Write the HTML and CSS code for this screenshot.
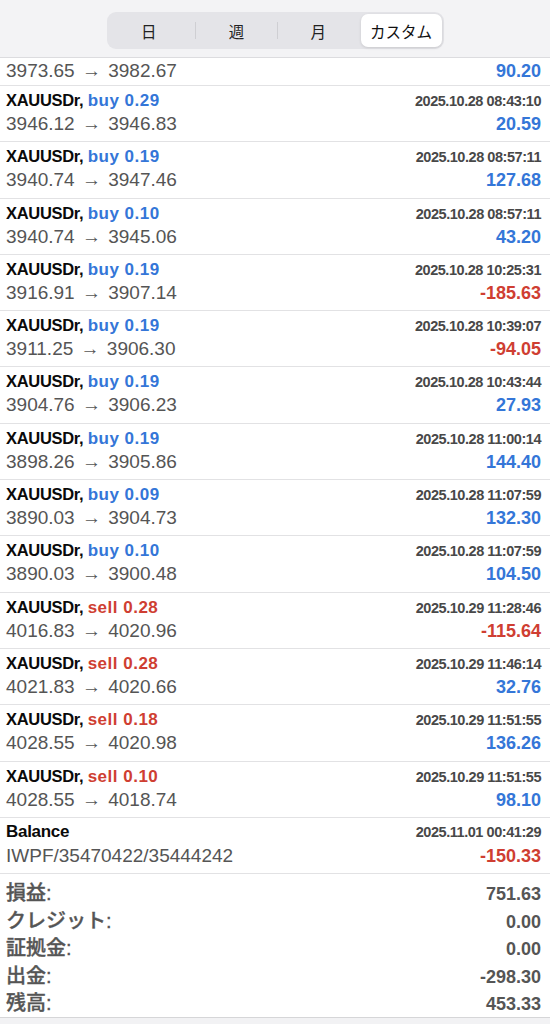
FILE: index.html
```html
<!DOCTYPE html>
<html lang="ja">
<head>
<meta charset="utf-8">
<title>履歴</title>
<link rel="stylesheet" href="styles.css">
</head>
<body>
<div class="app">
  <header class="header">
    <div class="seg">
      <div class="seg-item">日</div>
      <div class="seg-div"></div>
      <div class="seg-item">週</div>
      <div class="seg-div"></div>
      <div class="seg-item">月</div>
      <div class="seg-item seg-active">カスタム</div>
    </div>
  </header>

  <div class="list">
    <div class="row row-partial">
      <div class="line2"><span class="price">3973.65 → 3982.67</span><span class="pnl pos">90.20</span></div>
    </div>

    <div class="row">
      <div class="line1"><span class="sym">XAUUSDr, <span class="act buy">buy 0.29</span></span><span class="date">2025.10.28 08:43:10</span></div>
      <div class="line2"><span class="price">3946.12 → 3946.83</span><span class="pnl pos">20.59</span></div>
    </div>
    <div class="row">
      <div class="line1"><span class="sym">XAUUSDr, <span class="act buy">buy 0.19</span></span><span class="date">2025.10.28 08:57:11</span></div>
      <div class="line2"><span class="price">3940.74 → 3947.46</span><span class="pnl pos">127.68</span></div>
    </div>
    <div class="row">
      <div class="line1"><span class="sym">XAUUSDr, <span class="act buy">buy 0.10</span></span><span class="date">2025.10.28 08:57:11</span></div>
      <div class="line2"><span class="price">3940.74 → 3945.06</span><span class="pnl pos">43.20</span></div>
    </div>
    <div class="row">
      <div class="line1"><span class="sym">XAUUSDr, <span class="act buy">buy 0.19</span></span><span class="date">2025.10.28 10:25:31</span></div>
      <div class="line2"><span class="price">3916.91 → 3907.14</span><span class="pnl neg">-185.63</span></div>
    </div>
    <div class="row">
      <div class="line1"><span class="sym">XAUUSDr, <span class="act buy">buy 0.19</span></span><span class="date">2025.10.28 10:39:07</span></div>
      <div class="line2"><span class="price">3911.25 → 3906.30</span><span class="pnl neg">-94.05</span></div>
    </div>
    <div class="row">
      <div class="line1"><span class="sym">XAUUSDr, <span class="act buy">buy 0.19</span></span><span class="date">2025.10.28 10:43:44</span></div>
      <div class="line2"><span class="price">3904.76 → 3906.23</span><span class="pnl pos">27.93</span></div>
    </div>
    <div class="row">
      <div class="line1"><span class="sym">XAUUSDr, <span class="act buy">buy 0.19</span></span><span class="date">2025.10.28 11:00:14</span></div>
      <div class="line2"><span class="price">3898.26 → 3905.86</span><span class="pnl pos">144.40</span></div>
    </div>
    <div class="row">
      <div class="line1"><span class="sym">XAUUSDr, <span class="act buy">buy 0.09</span></span><span class="date">2025.10.28 11:07:59</span></div>
      <div class="line2"><span class="price">3890.03 → 3904.73</span><span class="pnl pos">132.30</span></div>
    </div>
    <div class="row">
      <div class="line1"><span class="sym">XAUUSDr, <span class="act buy">buy 0.10</span></span><span class="date">2025.10.28 11:07:59</span></div>
      <div class="line2"><span class="price">3890.03 → 3900.48</span><span class="pnl pos">104.50</span></div>
    </div>
    <div class="row">
      <div class="line1"><span class="sym">XAUUSDr, <span class="act sell">sell 0.28</span></span><span class="date">2025.10.29 11:28:46</span></div>
      <div class="line2"><span class="price">4016.83 → 4020.96</span><span class="pnl neg">-115.64</span></div>
    </div>
    <div class="row">
      <div class="line1"><span class="sym">XAUUSDr, <span class="act sell">sell 0.28</span></span><span class="date">2025.10.29 11:46:14</span></div>
      <div class="line2"><span class="price">4021.83 → 4020.66</span><span class="pnl pos">32.76</span></div>
    </div>
    <div class="row">
      <div class="line1"><span class="sym">XAUUSDr, <span class="act sell">sell 0.18</span></span><span class="date">2025.10.29 11:51:55</span></div>
      <div class="line2"><span class="price">4028.55 → 4020.98</span><span class="pnl pos">136.26</span></div>
    </div>
    <div class="row">
      <div class="line1"><span class="sym">XAUUSDr, <span class="act sell">sell 0.10</span></span><span class="date">2025.10.29 11:51:55</span></div>
      <div class="line2"><span class="price">4028.55 → 4018.74</span><span class="pnl pos">98.10</span></div>
    </div>
    <div class="row">
      <div class="line1"><span class="sym sym-balance">Balance</span><span class="date">2025.11.01 00:41:29</span></div>
      <div class="line2"><span class="price">IWPF/35470422/35444242</span><span class="pnl neg">-150.33</span></div>
    </div>
  </div>

  <div class="summary">
    <div class="sum-row"><span class="sum-label">損益:</span><span class="sum-val">751.63</span></div>
    <div class="sum-row"><span class="sum-label">クレジット:</span><span class="sum-val">0.00</span></div>
    <div class="sum-row"><span class="sum-label">証拠金:</span><span class="sum-val">0.00</span></div>
    <div class="sum-row"><span class="sum-label">出金:</span><span class="sum-val">-298.30</span></div>
    <div class="sum-row"><span class="sum-label">残高:</span><span class="sum-val">453.33</span></div>
  </div>
</div>
</body>
</html>
```

FILE: styles.css
```css
html, body {
  margin: 0;
  padding: 0;
  background: #f2f2f4;
}

body {
  font-family: "Liberation Sans", Arial, "Noto Sans CJK JP", sans-serif;
  color: #111;
  width: 550px;
  height: 1024px;
  overflow: hidden;
}

.app {
  display: flex;
  flex-direction: column;
}

.header {
  background: #f3f3f5;
  border-bottom: 1px solid #dcdcdf;
  display: flex;
  justify-content: center;
  align-items: flex-start;
  padding-top: 12px;
  box-sizing: border-box;
  height: 58px;
}

.seg {
  display: flex;
  align-items: center;
  width: 337px;
  height: 37px;
  padding: 2px;
  box-sizing: border-box;
  background: #e4e4e8;
  border-radius: 9px;
  margin-left: 0;
}

.seg-item {
  flex: 1;
  height: 100%;
  display: flex;
  align-items: center;
  justify-content: center;
  font-family: "Noto Sans CJK JP", sans-serif;
  font-size: 15.5px;
  color: #222;
}

.seg-item:first-child {
  padding-right: 6px;
}

.seg-div {
  width: 1px;
  height: 17px;
  background: #cfcfd3;
}

.seg-active {
  background: #ffffff;
  border-radius: 7px;
  box-shadow: 0 1px 3px rgba(0, 0, 0, 0.12);
  color: #111;
  margin-left: 2px;
}

.list {
  background: #ffffff;
}

.row {
  height: 56.3px;
  box-sizing: border-box;
  border-bottom: 1px solid #e2e2e4;
  padding: 3px 9px 0 6px;
}

.row-partial {
  height: 28px;
  padding-top: 0;
  display: flex;
  flex-direction: column;
  justify-content: flex-end;
  padding-bottom: 1px;
}

.line1,
.line2 {
  display: flex;
  justify-content: space-between;
  align-items: baseline;
}

.line1 {
  height: 22px;
  line-height: 22px;
}

.line2 {
  height: 26px;
  line-height: 26px;
}

.sym {
  font-size: 16.5px;
  font-weight: bold;
  letter-spacing: -0.3px;
  color: #0a0a0a;
}

.sym-balance {
  font-size: 17px;
}

.act {
  font-size: 17px;
  letter-spacing: 0.5px;
}

.buy {
  color: #3476d8;
}

.sell {
  color: #cf3e32;
}

.date {
  font-size: 14.5px;
  font-weight: bold;
  letter-spacing: -0.45px;
  color: #484848;
}

.price {
  font-size: 19px;
  word-spacing: 2px;
  color: #555555;
}

.pnl {
  font-size: 18px;
  font-weight: bold;
}

.pos {
  color: #3476d8;
}

.neg {
  color: #cf3e32;
}

.summary {
  background: #ffffff;
  padding: 6px 9px 0 6px;
  height: 144px;
  box-sizing: border-box;
  border-bottom: 1px solid #d6d6d8;
}

.sum-row {
  display: flex;
  justify-content: space-between;
  align-items: baseline;
  height: 27.5px;
  line-height: 27.5px;
}

.sum-label {
  font-family: "Liberation Sans", "Noto Sans CJK JP", sans-serif;
  font-size: 20px;
  font-weight: 500;
  color: #555555;
  -webkit-text-stroke: 0.35px #555555;
}

.sum-val {
  font-size: 18px;
  font-weight: bold;
  color: #555555;
}
```
